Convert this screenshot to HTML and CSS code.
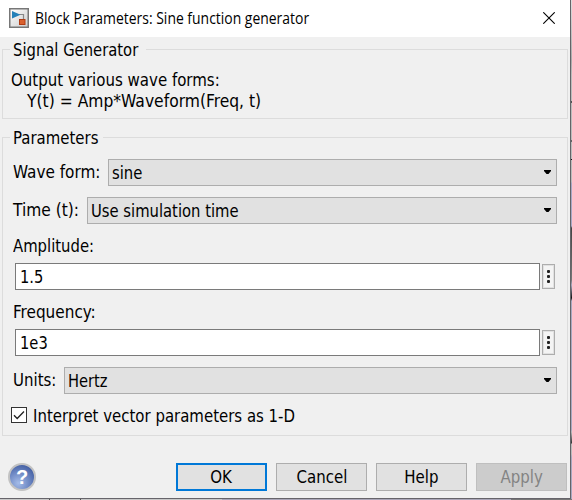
FILE: index.html
```html
<!DOCTYPE html>
<html lang="en">
<head>
<meta charset="utf-8">
<title>Block Parameters: Sine function generator</title>
<link rel="stylesheet" href="styles.css">
</head>
<body>
<div class="desktop">
<main class="dialog">
  <header class="titlebar">
    <svg class="app-icon" width="20" height="20" viewBox="0 0 20 20">
      <defs><linearGradient id="tile" x2="1" y2="1"><stop stop-color="#fff"/><stop offset="1" stop-color="#ccc"/></linearGradient></defs>
      <rect x=".75" y=".75" width="18.5" height="18.5" fill="url(#tile)" stroke="#777" stroke-width="1.5"/>
      <path d="M10 6.500h4.500V12" fill="none" stroke="#888" stroke-width="1.200"/>
      <path d="M3 3 11.500 6.800 3 10.500z" fill="#2380b8"/>
      <rect x="10.500" y="11.500" width="5.500" height="5" fill="#d9602e" stroke="#b03c14"/>
    </svg>
    <h1 class="title"><span class="t t-title">Block Parameters: Sine function generator</span></h1>
    <svg class="close" width="12" height="12" viewBox="0 0 12 12"><path d="M.3.3 11.700 11.700M11.700.3.3 11.700" stroke="#000" stroke-width="1.100"/></svg>
  </header>

  <section class="group about">
    <h2 class="legend"><span class="t t-signal">Signal Generator</span></h2>
    <p class="line"><span class="t t-output">Output various wave forms:</span></p>
    <p class="line indent"><span class="t t-formula">Y(t) = Amp*Waveform(Freq, t)</span></p>
  </section>

  <section class="group params">
    <h2 class="legend"><span class="t t-params">Parameters</span></h2>
    <div class="row">
      <label class="label wave"><span class="t">Wave form:</span></label>
      <div class="select"><span class="t t-sine">sine</span><svg class="arrow" width="7" height="4" viewBox="0 0 7 4"><path d="M0 0h7v1L4.500 4h-2L0 1z"/></svg></div>
    </div>
    <div class="row">
      <label class="label time"><span class="t t-time">Time (t):</span></label>
      <div class="select"><span class="t t-sim">Use simulation time</span><svg class="arrow" width="7" height="4" viewBox="0 0 7 4"><path d="M0 0h7v1L4.500 4h-2L0 1z"/></svg></div>
    </div>
    <div class="field">
      <label class="label"><span class="t t-amp">Amplitude:</span></label>
      <div class="edit"><div class="input"><span class="t t-value">1.5</span></div><div class="more"><i></i><i></i><i></i></div></div>
    </div>
    <div class="field">
      <label class="label"><span class="t">Frequency:</span></label>
      <div class="edit"><div class="input"><span class="t t-value">1e3</span></div><div class="more"><i></i><i></i><i></i></div></div>
    </div>
    <div class="row units-row">
      <label class="label units"><span class="t t-units">Units:</span></label>
      <div class="select"><span class="t t-hertz">Hertz</span><svg class="arrow" width="7" height="4" viewBox="0 0 7 4"><path d="M0 0h7v1L4.500 4h-2L0 1z"/></svg></div>
    </div>
    <div class="check-row">
      <span class="checkbox"><svg width="14" height="14" viewBox="0 0 14 14"><path d="M2 7.200 5.200 10.500 12 3.500" fill="none" stroke="#222" stroke-width="1.300"/></svg></span>
      <span class="t t-check">Interpret vector parameters as 1-D</span>
    </div>
  </section>

  <footer class="footer">
    <div class="help-icon"><b>?</b></div>
    <div class="button primary"><span class="t t-button">OK</span></div>
    <div class="button"><span class="t t-button">Cancel</span></div>
    <div class="button"><span class="t t-button">Help</span></div>
    <div class="button disabled"><span class="t t-button">Apply</span></div>
  </footer>
</main>
</div>
</body>
</html>
```
FILE: styles.css
```css
* { box-sizing: border-box; }
body { margin: 0; overflow: hidden; font: 17px/22px "DejaVu Sans Condensed", "DejaVu Sans", sans-serif; font-stretch: condensed; color: #000; }
h1, h2, p { margin: 0; font-size: inherit; font-weight: normal; }
.desktop {
  width: 572px; height: 500px;
  background:
    linear-gradient(#555, #555) 49px 499px / 1px 1px no-repeat,
    linear-gradient(#555, #555) 80px 499px / 1px 1px no-repeat,
    linear-gradient(#777, #777) 511px 499px / 61px 1px no-repeat,
    linear-gradient(90deg, #c8c8c8 222px, #aaa6b8 222px) 0 499px / 572px 1px no-repeat,
    linear-gradient(#ddd 0, #aaa 60px, #bbb 75px, #bbb 101px, #555 101px, #555 103px, #bbb 103px, #bbb 140px, #666 140px, #666 142px, #bbb 142px, #bbb 159px, #111 159px, #111 160px, #bbb 160px, #bbb 182px, #a8a8c6 183px, #a8a8c6 226px, #444 228px, #777 280px, #a8a8c0 285px, #111 298px, #a8a8c0 301px, #a8a8c0 430px, #bbb 432px, #333 443px, #bbb 444px, #bbb 454px, #a8a8c0 457px);
}
.dialog { width: 571px; height: 499px; background: #f0f0f0; border-right: 1px solid #646468; border-bottom: 1px solid #66646a; }
.t { display: inline-block; white-space: pre; transform: scale(var(--fit, 1), 1.05); transform-origin: 0 50%; }
.t-title { --fit: .929; }
.t-signal { --fit: .967; }
.t-output { --fit: .981; }
.t-formula { --fit: 1.017; }
.t-params { --fit: .977; }
.t-sine { --fit: .97; }
.t-time { --fit: 1.01; }
.t-sim { --fit: .967; }
.t-amp { --fit: .97; }
.t-value { --fit: .96; }
.t-units { --fit: .98; }
.t-hertz { --fit: .96; }
.t-check { --fit: .978; }
.t-button { --fit: .98; transform-origin: 50% 50%; }
.titlebar { display: flex; align-items: center; height: 37px; background: #fff; padding: 0 15px 0 9px; }
.app-icon { flex: none; margin-top: -1px; }
.title { flex: 1; margin: -2px 0 0 6px; font: 15px/20px "Open Sans", sans-serif; }
.close { margin-top: -1px; }
.group { position: relative; margin: 0 2px; border: 1px solid #dcdcdc; }
.about { margin-top: 12px; height: 70px; padding: 20px 8px 0; }
.params { margin-top: 18px; height: 299px; padding: 21px 10px 0 9px; }
.legend { position: absolute; left: 7px; top: -11px; padding: 0 3px; background: #f0f0f0; }
.line { height: 21px; line-height: 21px; }
.indent { padding-left: 16px; }
.row { display: flex; height: 27px; margin-bottom: 11px; }
.label { flex: none; line-height: 27px; padding-left: 1px; }
.wave { width: 96px; }
.time { width: 75px; }
.units { width: 52px; }
.select { flex: 1; display: flex; align-items: center; justify-content: space-between; padding: 0 5px 0 3px; background: #e1e1e1; border: 1px solid #adadad; }
.arrow { margin-top: -1px; }
.field { height: 66px; }
.field .label { display: block; height: 28px; line-height: 22px; }
.edit { display: flex; align-items: center; gap: 2px; padding: 0 2px 0 3px; }
.input { flex: 1; height: 27px; display: flex; align-items: center; padding-left: 4px; background: #fff; border: 1px solid #7a7a7a; }
.more { width: 13px; height: 25px; display: flex; flex-direction: column; align-items: center; justify-content: center; gap: 2px; border: 1px solid #adadad; background: #f4f4f4; box-shadow: inset 0 0 0 1px #e1e1e1; }
.more i { width: 3px; height: 3px; background: #222; border-radius: 1px; }
.units-row { margin: 0 0 13px; }
.check-row { display: flex; align-items: center; height: 16px; margin-left: -1px; }
.check-row .t { margin-top: 2px; }
.checkbox { width: 16px; height: 16px; margin-right: 6px; border: 1px solid #333; background: #fff; }
.checkbox svg { display: block; }
.footer { display: flex; align-items: center; gap: 9px; height: 28px; margin-top: 27px; padding: 0 3px 0 8px; }
.help-icon { width: 28px; height: 28px; margin-right: auto; border: 2px solid #c2c2c2; border-radius: 50%; background: radial-gradient(circle at 35% 75%, #a5bce8, #6883c0 50%, #2c478f); color: #fff; font: 20px/24px "Liberation Sans", sans-serif; text-align: center; }
.button { width: 91px; height: 28px; display: flex; align-items: center; justify-content: center; background: #e1e1e1; border: 1px solid #adadad; }
.primary { border: 2px solid #0078d7; }
.disabled { background: #ccc; border-color: #bfbfbf; color: #838383; }
```
